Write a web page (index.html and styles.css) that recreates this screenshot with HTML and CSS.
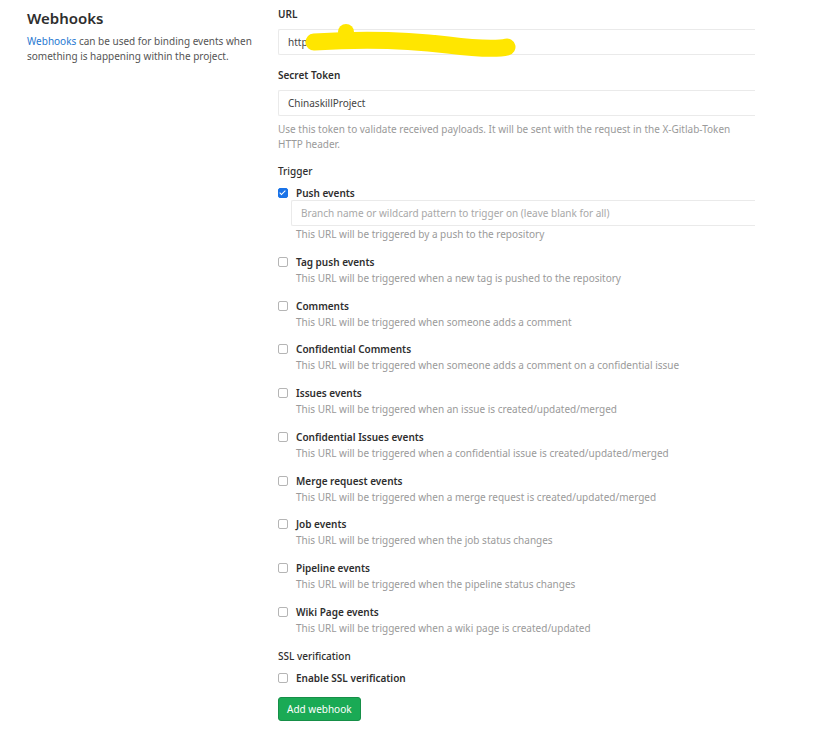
FILE: index.html
```html
<!DOCTYPE html>
<html lang="en">
<head>
  <meta charset="UTF-8" />
  <title>Webhooks</title>
  <link rel="stylesheet" href="styles.css">
</head>
<body>

<div class="page">
  <div class="intro">
    <h3>Webhooks</h3>
    <p><a href="#">Webhooks</a> can be used for binding events when something is happening within the project.</p>
  </div>

  <form class="hook-form">
    <label class="field-label">URL</label>
    <div class="url-wrap">
      <input class="text-input" type="text" value="http">
      <svg class="scribble" width="240" height="40" viewBox="0 0 240 40">
        <path d="M36 21 C80 18 130 19 170 24 S225 27 229 26" stroke="#ffe600" stroke-width="17" stroke-linecap="round" fill="none"/>
        <circle cx="68" cy="11" r="8" fill="#ffe600"/>
      </svg>
    </div>

    <label class="field-label">Secret Token</label>
    <input class="text-input" type="text" value="ChinaskillProject">
    <p class="help">Use this token to validate received payloads. It will be sent with the request in the X-Gitlab-Token HTTP header.</p>

    <label class="field-label section">Trigger</label>

    <div class="option">
      <label class="check"><span class="box checked"></span>Push events</label>
      <input class="text-input branch" type="text" placeholder="Branch name or wildcard pattern to trigger on (leave blank for all)">
      <p class="option-help">This URL will be triggered by a push to the repository</p>
    </div>

    <div class="option">
      <label class="check"><span class="box"></span>Tag push events</label>
      <p class="option-help">This URL will be triggered when a new tag is pushed to the repository</p>
    </div>

    <div class="option">
      <label class="check"><span class="box"></span>Comments</label>
      <p class="option-help">This URL will be triggered when someone adds a comment</p>
    </div>

    <div class="option">
      <label class="check"><span class="box"></span>Confidential Comments</label>
      <p class="option-help">This URL will be triggered when someone adds a comment on a confidential issue</p>
    </div>

    <div class="option">
      <label class="check"><span class="box"></span>Issues events</label>
      <p class="option-help">This URL will be triggered when an issue is created/updated/merged</p>
    </div>

    <div class="option">
      <label class="check"><span class="box"></span>Confidential Issues events</label>
      <p class="option-help">This URL will be triggered when a confidential issue is created/updated/merged</p>
    </div>

    <div class="option">
      <label class="check"><span class="box"></span>Merge request events</label>
      <p class="option-help">This URL will be triggered when a merge request is created/updated/merged</p>
    </div>

    <div class="option">
      <label class="check"><span class="box"></span>Job events</label>
      <p class="option-help">This URL will be triggered when the job status changes</p>
    </div>

    <div class="option">
      <label class="check"><span class="box"></span>Pipeline events</label>
      <p class="option-help">This URL will be triggered when the pipeline status changes</p>
    </div>

    <div class="option">
      <label class="check"><span class="box"></span>Wiki Page events</label>
      <p class="option-help">This URL will be triggered when a wiki page is created/updated</p>
    </div>

    <label class="field-label section ssl">SSL verification</label>
    <div class="option">
      <label class="check"><span class="box"></span>Enable SSL verification</label>
    </div>

    <div><button type="button" class="add-btn">Add webhook</button></div>
  </form>
</div>

</body>
</html>
```

FILE: styles.css
```css
html, body {
  margin: 0; padding: 0;
  background: #fff; color: #2e2e2e;
  font-family: 'Noto Sans', sans-serif;
  font-size: 10px;
}

.page {
  display: flex;
  padding-top: 6px;
}

.intro {
  width: 251px;
  padding-left: 27px;
  flex-shrink: 0;
}
.intro h3 {
  margin: 0; font-size: 15px; font-weight: 600;
  line-height: 24px; color: #2e2e2e;
}
.intro p {
  margin: 4px 0 0; line-height: 15px; color: #555;
  font-size: 10px;
}
.intro a { color: #1f78d1; text-decoration: none; }

.hook-form {
  width: 477px;
  display: flex; flex-direction: column;
}

.field-label {
  display: block; font-weight: 600;
  line-height: 16px; font-size: 10px;
  margin-bottom: 7px;
}
.field-label.section { margin-top: 11px; margin-bottom: 6px; font-weight: 500; }
.field-label.ssl { margin-top: 0; }

.text-input {
  display: block; box-sizing: border-box;
  width: 100%; height: 26px;
  border: 1px solid #eaeaea; border-right: none;
  border-radius: 2px 0 0 2px;
  padding: 0 9px; margin: 0 0 12px;
  font-family: inherit; font-size: 10px; color: #444;
  background: #fff;
}
.text-input::placeholder { color: #a8a8a8; }

.url-wrap { position: relative; }
.scribble {
  position: absolute; left: 0; top: -8px;
  pointer-events: none;
}

.help {
  margin: -6px 0 0; line-height: 15px;
  color: #9a9a9a; font-size: 10px;
}

.option { margin-bottom: 11.75px; }

.check {
  display: flex; align-items: center;
  line-height: 16px; font-weight: 600; font-size: 10px;
}
.box {
  width: 8px; height: 8px;
  border: 1px solid #b5b5b5; border-radius: 2px;
  margin-right: 8px; flex-shrink: 0;
}
.box.checked {
  background: #1a73e8; border-color: #1a73e8;
  position: relative;
}
.box.checked::after {
  content: ""; position: absolute;
  left: 2px; top: 0px; width: 2px; height: 5px;
  border: solid #fff; border-width: 0 1.5px 1.5px 0;
  transform: rotate(45deg);
}

.text-input.branch {
  width: calc(100% - 13px);
  margin: -1px 0 0 13px;
}

.option-help {
  margin: 0; padding-left: 18px;
  line-height: 16px; color: #9a9a9a; font-size: 10px;
}

.add-btn {
  height: 24px; padding: 0 8px;
  background: #1aaa55; color: #fff;
  border: 1px solid #168f48; border-radius: 3px;
  font-family: inherit; font-size: 10px;
}
```
